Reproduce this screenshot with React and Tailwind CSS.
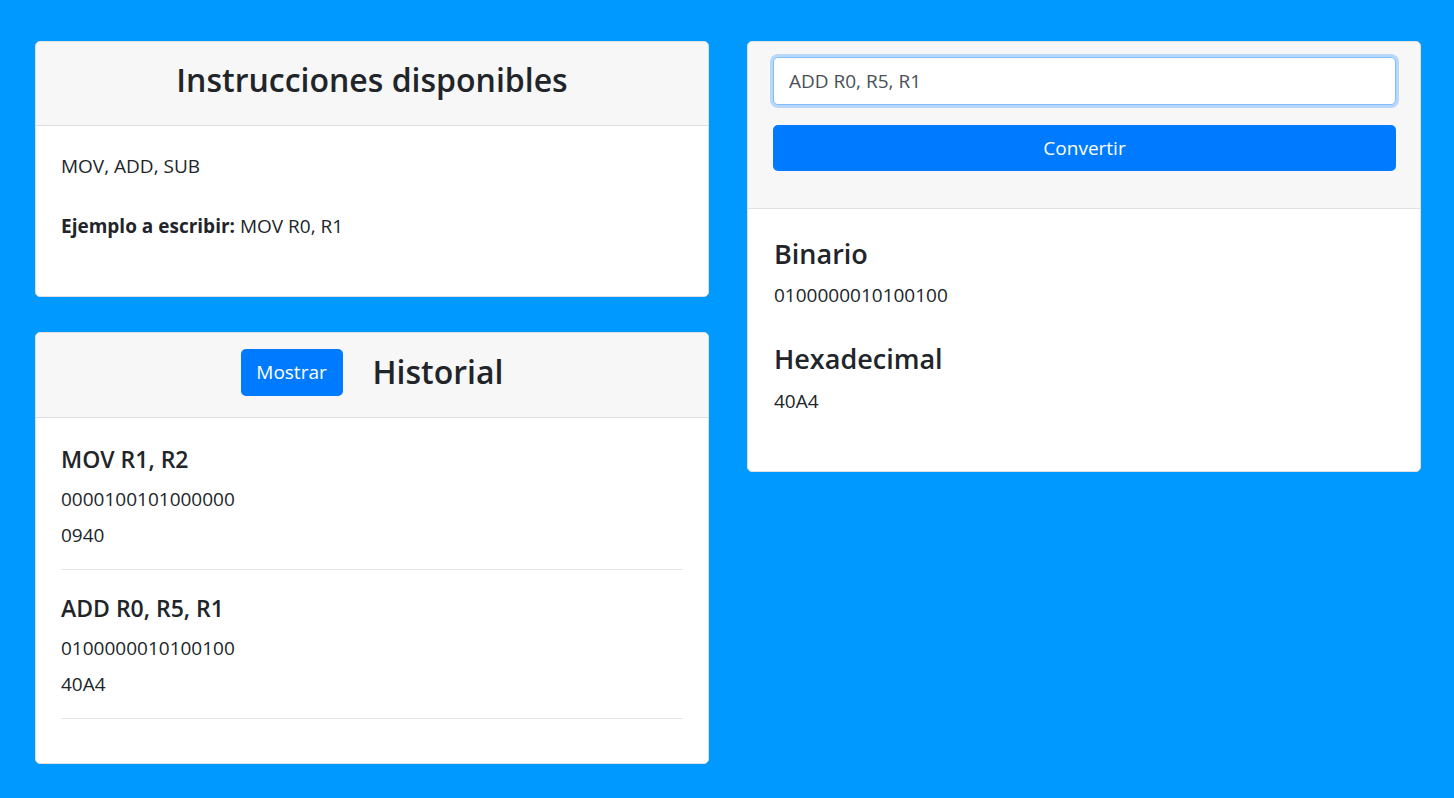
import React from 'react'

const history = [
  { code: 'MOV R1, R2', bin: '0000100101000000', hex: '0940' },
  { code: 'ADD R0, R5, R1', bin: '0100000010100100', hex: '40A4' },
]

export default function App() {
  return (
    <div
      className="min-h-screen bg-[#0099ff] text-[#212529] text-[19px] leading-[27px]"
      style={{ fontFamily: '"Open Sans", "Noto Sans", sans-serif' }}
    >
      <div className="flex gap-[38px] pl-[35px] pt-[41px]">
        {/* Left column */}
        <div className="flex w-[674px] flex-col gap-[35px]">
          {/* Instrucciones */}
          <div className="h-[256px] overflow-hidden rounded-[5px] border border-[#dfdfdf] bg-white">
            <div className="flex h-[84px] items-center justify-center border-b border-[#dfdfdf] bg-[#f7f7f7] pb-[8px]">
              <h2 className="text-[32px] leading-[40px] font-semibold">Instrucciones disponibles</h2>
            </div>
            <div className="px-[25px] pt-[27px]">
              <p>MOV, ADD, SUB</p>
              <p className="mt-[33px]">
                <strong className="font-bold">Ejemplo a escribir:</strong> MOV R0, R1
              </p>
            </div>
          </div>

          {/* Historial */}
          <div className="h-[432px] overflow-hidden rounded-[5px] border border-[#dfdfdf] bg-white">
            <div className="flex h-[85px] items-center justify-center gap-[30px] border-b border-[#dfdfdf] bg-[#f7f7f7] pb-[6px]">
              <button className="h-[47px] w-[102px] rounded-[5px] bg-[#007bff] text-white">Mostrar</button>
              <h2 className="text-[32px] leading-[40px] font-semibold">Historial</h2>
            </div>
            <div className="px-[25px] pt-[3px]">
              {history.map((h) => (
                <div key={h.code} className="border-b border-[#e5e5e5] pt-[24px] pb-[20px]">
                  <h4 className="text-[23px] leading-[29px] font-semibold">{h.code}</h4>
                  <p className="mt-[12px]">{h.bin}</p>
                  <p className="mt-[9px]">{h.hex}</p>
                </div>
              ))}
            </div>
          </div>
        </div>

        {/* Right column */}
        <div className="h-[431px] w-[674px] overflow-hidden rounded-[5px] border border-[#dfdfdf] bg-white">
          <div className="h-[167px] border-b border-[#dfdfdf] bg-[#f7f7f7] pl-[25px] pr-[24px] pt-[15px]">
            <input
              readOnly
              value="ADD R0, R5, R1"
              className="h-[48px] w-full rounded-[5px] border border-[#80bdff] bg-white px-[15px] text-[#495057] shadow-[0_0_0_3px_rgba(0,123,255,0.25)] outline-none"
            />
            <button className="mt-[20px] h-[46px] w-full rounded-[5px] bg-[#007bff] text-white">Convertir</button>
          </div>
          <div className="px-[26px] pt-[28px]">
            <h3 className="text-[27px] leading-[34px] font-semibold">Binario</h3>
            <p className="mt-[11px]">0100000010100100</p>
            <h3 className="mt-[33px] text-[27px] leading-[34px] font-semibold">Hexadecimal</h3>
            <p className="mt-[12px]">40A4</p>
          </div>
        </div>
      </div>
    </div>
  )
}
